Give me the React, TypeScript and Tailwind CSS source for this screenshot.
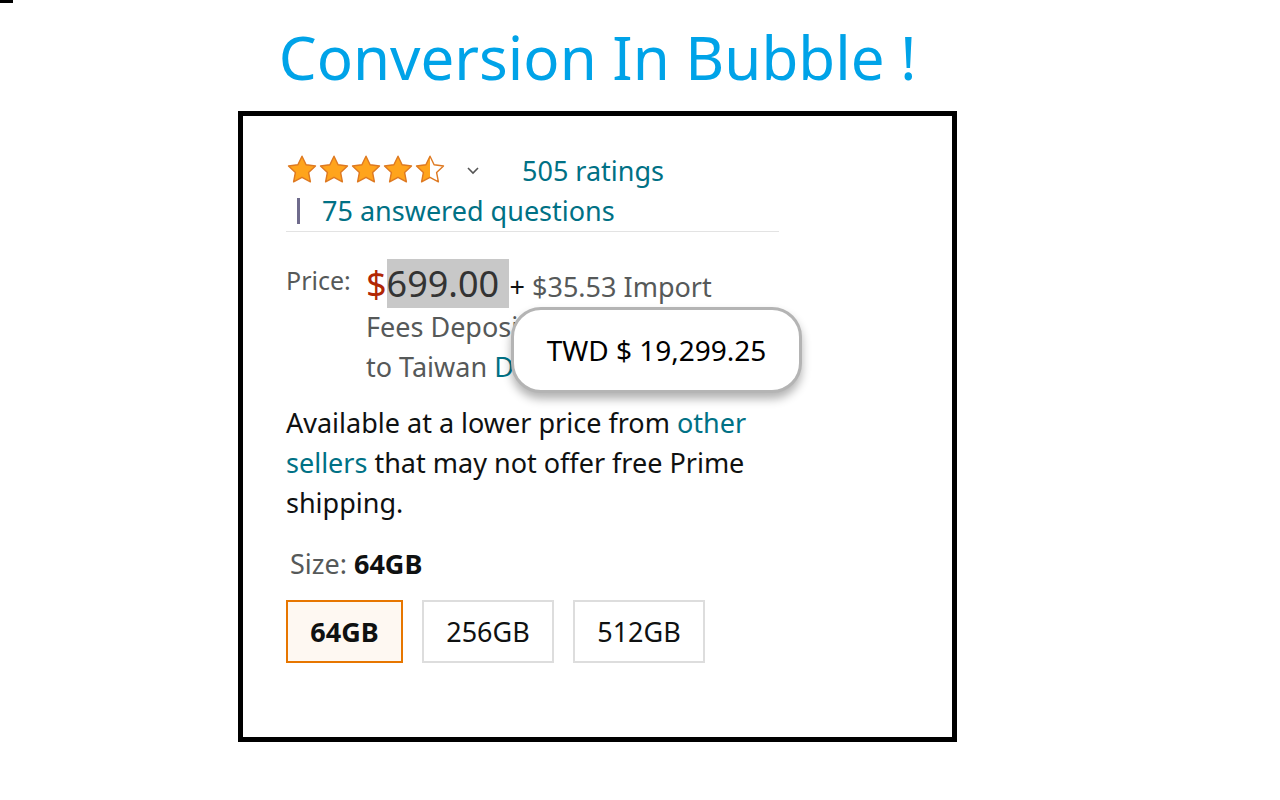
import { ReactNode } from "react";

const STAR =
  "M16 2.2l4.1 8.6 9.4 1.2-6.9 6.5 1.8 9.3L16 23.3l-8.4 4.5 1.8-9.3-6.9-6.5 9.4-1.2z";

function Star({ half = false }: { half?: boolean }) {
  return (
    <svg width="32" height="32" viewBox="0 0 32 32">
      <defs>
        <clipPath id="left-half">
          <rect x="0" y="0" width="16" height="32" />
        </clipPath>
      </defs>
      {half ? (
        <>
          <path d={STAR} fill="#ffffff" />
          <path d={STAR} fill="#ffa41c" clipPath="url(#left-half)" />
        </>
      ) : (
        <path d={STAR} fill="#ffa41c" />
      )}
      <path d={STAR} fill="none" stroke="#de7921" strokeWidth="1.4" strokeLinejoin="round" />
    </svg>
  );
}

function SizeButton({ label, active = false }: { label: string; active?: boolean }) {
  return (
    <div
      className={
        active
          ? "h-[63px] w-[117px] flex items-center justify-center border-2 border-[#e77600] bg-[#fef8f2] font-bold"
          : "h-[63px] w-[132px] flex items-center justify-center border-2 border-[#dddddd] bg-white"
      }
    >
      {label}
    </div>
  );
}

function Link({ children }: { children: ReactNode }) {
  return <span className="text-[#007185]">{children}</span>;
}

export default function App() {
  return (
    <div className="min-h-[800px] bg-white font-['Noto_Sans','Open_Sans',sans-serif]">
      <div className="h-[3px] w-[13px] bg-black" />
      <div className="ml-[238px] w-[719px]">
        <h1 className="h-[108px] pt-[14px] text-center text-[60px] leading-[80px] text-[#00a3e8]">
          Conversion In Bubble !
        </h1>

        <div className="h-[631px] border-[5px] border-black pl-[43px] pt-[33px] text-[27px] leading-[40px] text-[#0f1111]">
          <div className="w-[493px]">
            <div className="flex h-[41px] items-center">
              <div className="flex">
                <Star />
                <Star />
                <Star />
                <Star />
                <Star half />
              </div>
              <svg width="14" height="10" viewBox="0 0 14 10" className="ml-[20px] mt-[2px]">
                <polyline points="2,2 7,7 12,2" fill="none" stroke="#555555" strokeWidth="1.6" />
              </svg>
              <span className="ml-[42px] mt-[2px]">
                <Link>505 ratings</Link>
              </span>
            </div>
            <div className="flex h-[41px] items-center">
              <div className="ml-[11px] h-[26px] w-[3px] bg-[#6f6b8c]" />
              <span className="ml-[22px]">
                <Link>75 answered questions</Link>
              </span>
            </div>
            <div className="h-px bg-[#e3e3e3]" />
          </div>

          <div className="relative mt-[32px] flex">
            <div className="w-[80px] text-[#565959] leading-[32px] text-[25px]">Price:</div>
            <div className="w-[380px]">
              <div className="flex items-baseline">
                <span className="text-[36px] leading-[40px]">
                  <span className="text-[#b12704]">$</span>
                  <span className="bg-[#c8c8c8] text-[#333333]">699.00&nbsp;</span>
                </span>
                <span className="ml-[1px]">+</span>
                <span className="ml-[7px] text-[#565959]">$35.53 Import</span>
              </div>
              <div className="text-[#565959]">Fees Deposit</div>
              <div className="text-[#565959]">
                to Taiwan <Link>Details</Link>
              </div>
            </div>
            <div className="absolute left-[225px] top-[43px] flex h-[86px] w-[291px] items-center justify-center rounded-[30px] border-[3px] border-[#b4b4b4] bg-white text-[28px] text-black shadow-[0_6px_10px_rgba(0,0,0,0.3)]">
              TWD $ 19,299.25
            </div>
          </div>

          <div className="mt-[16px] w-[480px]">
            Available at a lower price from <Link>other sellers</Link> that may not offer free
            Prime shipping.
          </div>

          <div className="mt-[21px] pl-[4px]">
            <span className="text-[#565959]">Size: </span>
            <span className="font-bold">64GB</span>
          </div>

          <div className="mt-[16px] flex gap-[19px]">
            <SizeButton label="64GB" active />
            <SizeButton label="256GB" />
            <SizeButton label="512GB" />
          </div>
        </div>
      </div>
    </div>
  );
}
